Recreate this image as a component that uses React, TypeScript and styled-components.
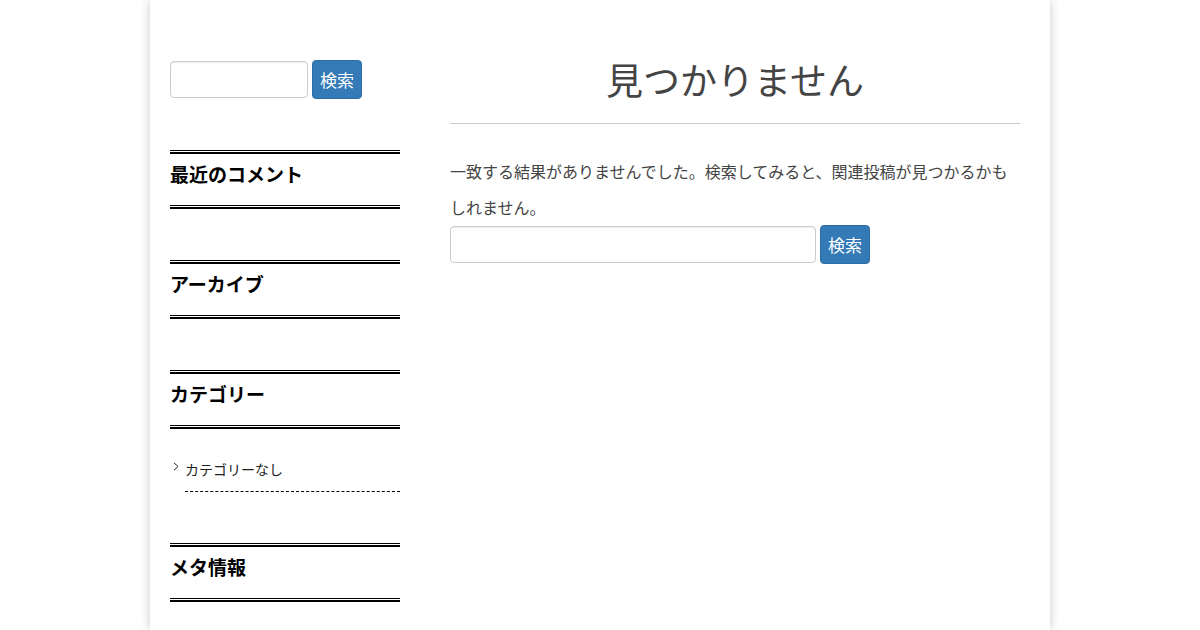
import styled, { createGlobalStyle } from "styled-components";

const GlobalStyle = createGlobalStyle`
  html, body {
    margin: 0;
    padding: 0;
    background: #fff;
    font-family: "Noto Sans CJK JP", "Noto Sans", sans-serif;
    color: #333;
  }
`;

const Page = styled.div`
  width: 900px;
  min-height: 630px;
  margin: 0 auto;
  box-sizing: border-box;
  padding: 60px 30px 0 20px;
  display: flex;
  gap: 50px;
  align-items: flex-start;
  box-shadow: 0 0 10px rgba(0, 0, 0, 0.22);
`;

const Sidebar = styled.aside`
  width: 230px;
  flex-shrink: 0;
  display: flex;
  flex-direction: column;
  gap: 51px;
`;

const Main = styled.main`
  flex: 1;
`;

const SearchForm = styled.form`
  display: flex;
  align-items: center;
  gap: 4px;
`;

const SearchInput = styled.input<{ $width: number }>`
  width: ${(p) => p.$width}px;
  height: 37px;
  box-sizing: border-box;
  border: 1px solid #ccc;
  border-radius: 4px;
  padding: 0 8px;
  font: inherit;
  box-shadow: inset 0 1px 1px rgba(0, 0, 0, 0.075);
`;

const SearchButton = styled.button`
  height: 39px;
  box-sizing: border-box;
  padding: 0 7px;
  background: #337ab7;
  border: 1px solid #2e6da4;
  border-radius: 4px;
  color: #fff;
  font-family: "Noto Sans CJK JP", sans-serif;
  font-size: 17px;
  line-height: 1;
  cursor: pointer;
`;

const Widget = styled.section``;

const WidgetTitle = styled.h3`
  margin: 0;
  padding: 12px 0 22px;
  font-size: 19px;
  line-height: 22px;
  font-weight: 700;
  color: #000;
  border-top: 1px solid #000;
  border-bottom: 2px solid #000;
  box-shadow: inset 0 1px 0 #fff, inset 0 3px 0 #000, inset 0 -1px 0 #fff,
    inset 0 -2px 0 #000;
`;

const List = styled.ul`
  list-style: none;
  margin: 0;
  padding: 0;
`;

const ListItem = styled.li`
  display: flex;
  align-items: center;
  margin-left: 15px;
  padding: 30px 0 12px;
  font-size: 14px;
  line-height: 20px;
  color: #222;
  border-bottom: 1px dashed #000;
`;

const Chevron = styled.svg`
  width: 6px;
  height: 9px;
  margin-left: -12px;
  margin-right: 6px;
  margin-top: -5px;
  flex-shrink: 0;
`;

const PageTitle = styled.h1`
  margin: -3px 0 0;
  padding-bottom: 22px;
  text-align: center;
  font-size: 37px;
  line-height: 44px;
  font-weight: 400;
  color: #444;
  border-bottom: 1px solid #ccc;
`;

const Message = styled.p`
  margin: 29px 0 0;
  font-size: 16px;
  line-height: 36px;
  color: #444;
`;

const sidebarWidgets = ["最近のコメント", "アーカイブ"];

export default function App() {
  return (
    <>
      <GlobalStyle />
      <Page>
        <Sidebar>
          <SearchForm onSubmit={(e) => e.preventDefault()}>
            <SearchInput $width={138} type="text" />
            <SearchButton type="submit">検索</SearchButton>
          </SearchForm>
          {sidebarWidgets.map((title) => (
            <Widget key={title}>
              <WidgetTitle>{title}</WidgetTitle>
            </Widget>
          ))}
          <Widget>
            <WidgetTitle>カテゴリー</WidgetTitle>
            <List>
              <ListItem>
                <Chevron viewBox="0 0 6 9">
                  <path d="M1 0.8 L5 4.5 L1 8.2" fill="none" stroke="#222" strokeWidth="1" />
                </Chevron>
                カテゴリーなし
              </ListItem>
            </List>
          </Widget>
          <Widget>
            <WidgetTitle>メタ情報</WidgetTitle>
          </Widget>
        </Sidebar>
        <Main>
          <PageTitle>見つかりません</PageTitle>
          <Message>
            一致する結果がありませんでした。検索してみると、関連投稿が見つかるかもしれません。
          </Message>
          <SearchForm onSubmit={(e) => e.preventDefault()}>
            <SearchInput $width={366} type="text" />
            <SearchButton type="submit">検索</SearchButton>
          </SearchForm>
        </Main>
      </Page>
    </>
  );
}
